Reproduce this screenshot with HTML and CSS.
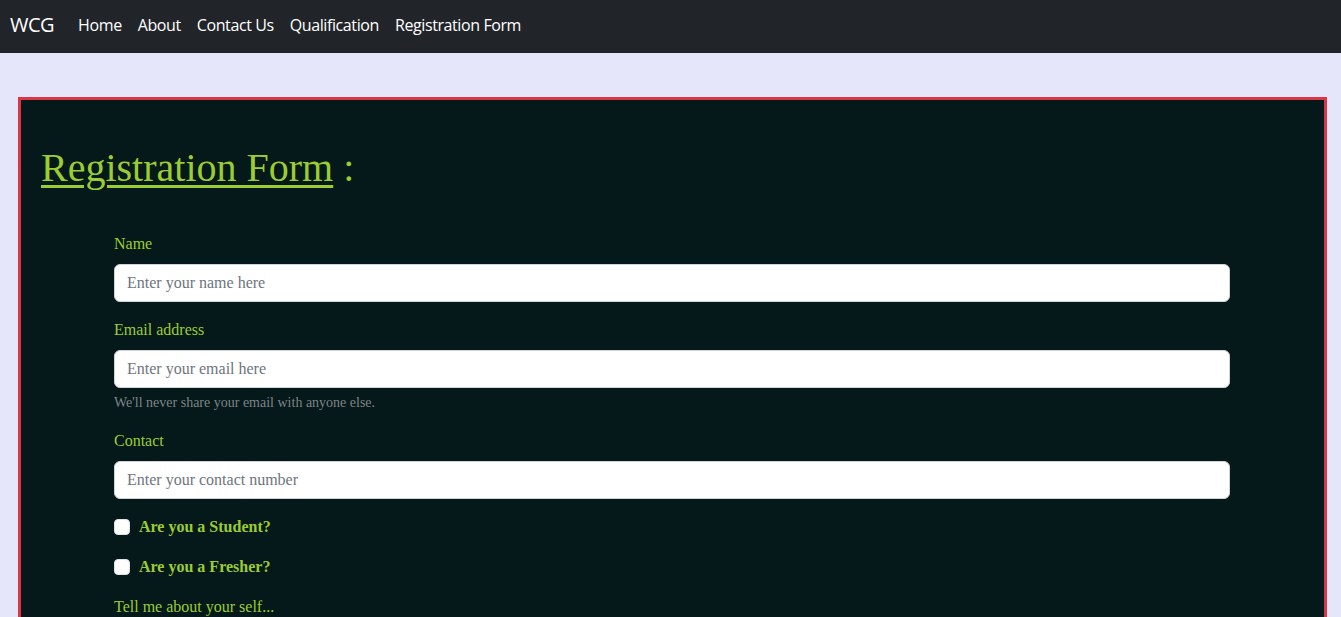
FILE: index.html
```html
<!DOCTYPE html>
<html lang="en">
<head>
<meta charset="utf-8">
<title>Registration Form</title>
<link rel="stylesheet" href="styles.css">
</head>
<body>
<nav class="navbar">
  <a class="brand" href="#">WCG</a>
  <ul class="nav">
    <li><a href="#">Home</a></li>
    <li><a href="#">About</a></li>
    <li><a href="#">Contact Us</a></li>
    <li><a href="#">Qualification</a></li>
    <li><a href="#">Registration Form</a></li>
  </ul>
</nav>
<main class="page">
  <section class="panel">
    <h1 class="title"><u>Registration Form</u> :</h1>
    <form class="form">
      <div class="group">
        <label class="label" for="name">Name</label>
        <input class="input" id="name" type="text" placeholder="Enter your name here">
      </div>
      <div class="group">
        <label class="label" for="email">Email address</label>
        <input class="input" id="email" type="email" placeholder="Enter your email here">
        <div class="help">We'll never share your email with anyone else.</div>
      </div>
      <div class="group">
        <label class="label" for="contact">Contact</label>
        <input class="input" id="contact" type="text" placeholder="Enter your contact number">
      </div>
      <div class="group check">
        <input class="box" id="student" type="checkbox">
        <label class="check-label" for="student">Are you a Student?</label>
      </div>
      <div class="group check">
        <input class="box" id="fresher" type="checkbox">
        <label class="check-label" for="fresher">Are you a Fresher?</label>
      </div>
      <div class="group">
        <label class="label" for="about">Tell me about your self...</label>
        <textarea class="input area" id="about" rows="3"></textarea>
      </div>
      <button class="submit" type="submit">Submit</button>
    </form>
  </section>
</main>
</body>
</html>
```
FILE: styles.css
```css
* { box-sizing: border-box; }
html, body { margin: 0; padding: 0; }
body {
  background: #e6e6fa;
  font-family: "Liberation Serif", "Times New Roman", serif;
  font-size: 16px;
  line-height: 1.5;
}
.navbar {
  height: 53px;
  background: #212529;
  display: flex;
  align-items: center;
  padding: 0 10px 3px;
  font-family: "Segoe UI", "Open Sans", "Noto Sans", sans-serif;
}
.brand {
  color: #fff;
  font-size: 20px;
  text-decoration: none;
  margin-right: 16px;
  letter-spacing: -0.5px;
}
.nav {
  list-style: none;
  display: flex;
  margin: 0;
  padding: 0;
}
.nav a {
  display: block;
  padding: 0 8px;
  color: #fff;
  text-decoration: none;
  font-size: 16px;
  letter-spacing: -0.4px;
}
.page {
  padding: 44px 14px 40px 18px;
}
.panel {
  background: #05181a;
  border: 3px solid #dc3545;
  padding: 44px 20px 40px;
}
.title {
  margin: 0 0 40px;
  font-weight: normal;
  font-size: 40px;
  line-height: 48px;
  color: #9acd32;
}
.title u { text-decoration-thickness: 3px; text-underline-offset: 4px; }
.form {
  margin: 0 74px 0 73px;
}
.group { margin-bottom: 16px; }
.label {
  display: block;
  margin-bottom: 8px;
  color: #9acd32;
  font-size: 16px;
  line-height: 24px;
}
.input {
  display: block;
  width: 100%;
  height: 38px;
  padding: 6px 12px;
  font-family: "Liberation Serif", "Times New Roman", serif;
  font-size: 16px;
  color: #212529;
  background: #fff;
  border: 1px solid #ced4da;
  border-radius: 6px;
}
.input::placeholder { color: #6c757d; }
.area { height: auto; min-height: 86px; }
.help {
  margin-top: 4px;
  color: #7d8587;
  font-size: 14px;
  line-height: 21px;
}
.check {
  display: flex;
  align-items: center;
  height: 24px;
}
.box {
  appearance: none;
  width: 16px;
  height: 16px;
  margin: 0 9px 0 0;
  background: #fff;
  border: 1px solid #dee2e6;
  border-radius: 4px;
}
.check-label {
  color: #9acd32;
  font-weight: bold;
  font-size: 16px;
}
.submit {
  padding: 6px 12px;
  border: 1px solid #0d6efd;
  background: #0d6efd;
  color: #fff;
  border-radius: 6px;
  font-size: 16px;
}
```
